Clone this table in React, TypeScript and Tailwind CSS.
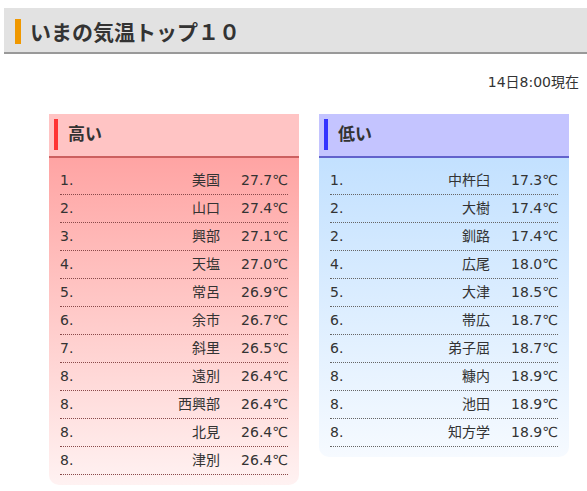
const high = [
  { rank: "1.", name: "美国", temp: "27.7℃" },
  { rank: "2.", name: "山口", temp: "27.4℃" },
  { rank: "3.", name: "興部", temp: "27.1℃" },
  { rank: "4.", name: "天塩", temp: "27.0℃" },
  { rank: "5.", name: "常呂", temp: "26.9℃" },
  { rank: "6.", name: "余市", temp: "26.7℃" },
  { rank: "7.", name: "斜里", temp: "26.5℃" },
  { rank: "8.", name: "遠別", temp: "26.4℃" },
  { rank: "8.", name: "西興部", temp: "26.4℃" },
  { rank: "8.", name: "北見", temp: "26.4℃" },
  { rank: "8.", name: "津別", temp: "26.4℃" },
];

const low = [
  { rank: "1.", name: "中杵臼", temp: "17.3℃" },
  { rank: "2.", name: "大樹", temp: "17.4℃" },
  { rank: "2.", name: "釧路", temp: "17.4℃" },
  { rank: "4.", name: "広尾", temp: "18.0℃" },
  { rank: "5.", name: "大津", temp: "18.5℃" },
  { rank: "6.", name: "帯広", temp: "18.7℃" },
  { rank: "6.", name: "弟子屈", temp: "18.7℃" },
  { rank: "8.", name: "糠内", temp: "18.9℃" },
  { rank: "8.", name: "池田", temp: "18.9℃" },
  { rank: "8.", name: "知方学", temp: "18.9℃" },
];

type Row = { rank: string; name: string; temp: string };

function Panel({ title, rows, hot }: { title: string; rows: Row[]; hot: boolean }) {
  return (
    <div
      className={
        "w-[250px] rounded-b-[10px] " +
        (hot
          ? "bg-gradient-to-b from-[#ff9999] to-[#fff2f2]"
          : "bg-gradient-to-b from-[#bbddff] to-[#f6faff]")
      }
    >
      <div
        className={
          "flex h-[44px] items-start border-b-2 pl-[5px] pt-[5px] " +
          (hot ? "border-[#cc6060] bg-[#ffc4c4]" : "border-[#6262cc] bg-[#c4c4ff]")
        }
      >
        <div className={"h-[31px] w-[4px] " + (hot ? "bg-[#ff3333]" : "bg-[#3333ff]")} />
        <h2 className="ml-[10px] pt-[4px] text-[17px] font-bold leading-[22px] text-[#333]">{title}</h2>
      </div>
      <ul className="px-[11px] pb-[10px] pt-[9px]">
        {rows.map((r, i) => (
          <li
            key={i}
            className={
              "flex h-[28px] items-center border-b border-dotted text-[14px] text-[#333] " +
              (hot ? "border-[#8a4a4a]" : "border-[#666]")
            }
          >
            <span className="w-[40px]">{r.rank}</span>
            <span className="flex-1 text-right">{r.name}</span>
            <span className="w-[68px] text-right">{r.temp}</span>
          </li>
        ))}
      </ul>
    </div>
  );
}

export default function App() {
  return (
    <main
      className="h-[491px] w-[587px] overflow-hidden bg-white text-[#333]"
      style={{ fontFamily: '"DejaVu Sans", "Noto Sans CJK JP", sans-serif' }}
    >
      <div className="pl-[4px] pt-[8px]">
        <div className="flex h-[46px] items-start border-b-2 border-[#999] bg-[#e2e2e2] pl-[11px] pt-[11px]">
          <div className="h-[25px] w-[6px] bg-[#f09800]" />
          <h1
            className="ml-[9px] text-[21px] font-bold leading-[25px] text-[#333]"
            style={{ fontFamily: '"Noto Sans CJK JP", sans-serif' }}
          >
            いまの気温トップ１０
          </h1>
        </div>
      </div>
      <p className="pr-[8px] pt-[18px] text-right text-[14px] leading-[20px]">14日8:00現在</p>
      <div className="flex items-start gap-[20px] pl-[49px] pt-[22px]">
        <Panel title="高い" rows={high} hot />
        <Panel title="低い" rows={low} hot={false} />
      </div>
    </main>
  );
}
